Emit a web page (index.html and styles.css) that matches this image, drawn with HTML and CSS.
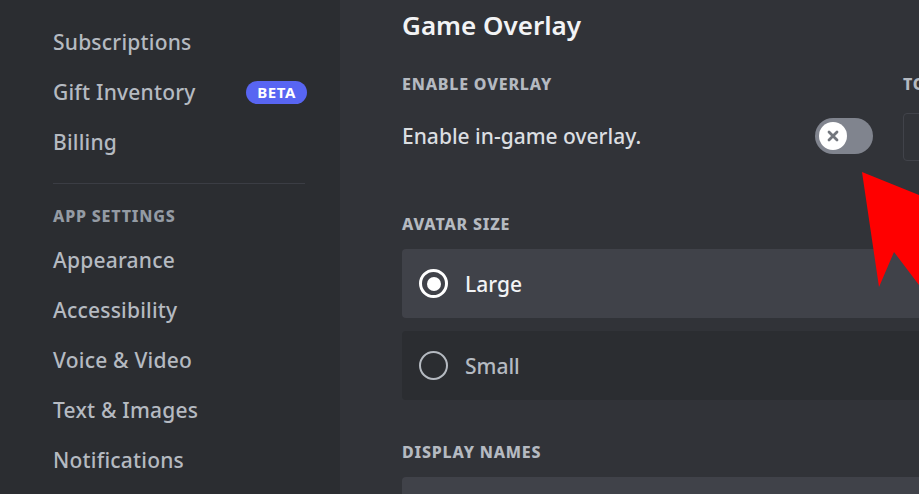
FILE: index.html
```html
<!DOCTYPE html>
<html lang="en">
    <head>
        <meta charset="utf-8">
        <title>User Settings - Game Overlay</title>
        <link rel="stylesheet" href="styles.css">
    </head>
    <body>
        <div class="app">
            <nav class="sidebar">
                <ul class="nav-list">
                    <li class="nav-item">Server Boost</li>
                    <li class="nav-item">Subscriptions</li>
                    <li class="nav-item">Gift Inventory <span class="badge">BETA</span></li>
                    <li class="nav-item">Billing</li>
                </ul>
                <div class="separator"></div>
                <h3 class="nav-header">App Settings</h3>
                <ul class="nav-list">
                    <li class="nav-item">Appearance</li>
                    <li class="nav-item">Accessibility</li>
                    <li class="nav-item">Voice &amp; Video</li>
                    <li class="nav-item">Text &amp; Images</li>
                    <li class="nav-item">Notifications</li>
                </ul>
            </nav>
            <main class="content">
                <h1 class="title">Game Overlay</h1>
                <div class="columns">
                    <section class="col-left">
                        <h2 class="section-header">Enable Overlay</h2>
                        <div class="setting-row">
                            <span class="setting-label">Enable in-game overlay.</span>
                            <div class="toggle">
                                <div class="knob">
                                    <svg width="16" height="16" viewBox="0 0 16 16">
                                        <path d="M4 4 L12 12 M12 4 L4 12" stroke="#72767d" stroke-width="2.8" stroke-linecap="round"/>
                                    </svg>
                                </div>
                            </div>
                        </div>
                    </section>
                    <section class="col-right">
                        <h2 class="section-header">Toggle Overlay Lock</h2>
                        <div class="keybind"></div>
                    </section>
                </div>

                <h2 class="section-header avatar-header">Avatar Size</h2>
                <div class="radio-group">
                    <div class="radio-option selected">
                        <span class="radio"></span>
                        <span class="radio-label">Large</span>
                    </div>
                    <div class="radio-option">
                        <span class="radio"></span>
                        <span class="radio-label">Small</span>
                    </div>
                </div>

                <h2 class="section-header names-header">Display Names</h2>
                <div class="radio-group">
                    <div class="radio-option selected">
                        <span class="radio"></span>
                        <span class="radio-label">Always</span>
                    </div>
                </div>
            </main>
        </div>
        <svg class="arrow" width="60" height="120" viewBox="0 0 60 120">
            <polygon points="3,2 60,25 60,115 35,82 20,117" fill="#ff0000"/>
        </svg>
    </body>
</html>
```

FILE: styles.css
```css
*{
    box-sizing: border-box;
}
body{
    margin: 0;
    padding: 0;
    background-color: #313338;
    font-family: "Noto Sans", "Open Sans", sans-serif;
    overflow: hidden;
}
.app{
    display: flex;
    width: 919px;
    height: 494px;
    overflow: hidden;
}
.sidebar{
    width: 340px;
    flex-shrink: 0;
    background-color: #2b2d31;
    padding: 0 33px 0 53px;
}
.nav-list{
    list-style: none;
    margin: 0;
    padding: 0;
}
.sidebar > .nav-list:first-child{
    margin-top: -33px;
}
.nav-item{
    height: 50px;
    display: flex;
    align-items: center;
    font-size: 21px;
    font-weight: 500;
    letter-spacing: 0.01em;
    color: #b5bac1;
}
.badge{
    margin-left: auto;
    background-color: #5865f2;
    color: #ffffff;
    font-size: 15px;
    font-weight: 700;
    line-height: 23px;
    padding: 0 11px;
    border-radius: 12px;
    letter-spacing: 0.04em;
}
.separator{
    height: 1px;
    background-color: #3b3d44;
    margin: 16px 2px 0 0;
}
.nav-header{
    margin: 22px 0 9px;
    line-height: 20px;
    font-size: 16px;
    font-weight: 800;
    text-transform: uppercase;
    letter-spacing: 0.05em;
    color: #949ba4;
}
.content{
    flex: 1;
    padding: 0 0 0 62px;
    min-width: 0;
    color: #dbdee1;
}
.title{
    margin: 9px 0 0;
    line-height: 32px;
    font-size: 26px;
    font-weight: 600;
    color: #f2f3f5;
}
.section-header{
    margin: 0;
    line-height: 20px;
    font-size: 16px;
    font-weight: 800;
    text-transform: uppercase;
    letter-spacing: 0.05em;
    color: #b5bac1;
    white-space: nowrap;
}
.columns{
    display: flex;
    gap: 30px;
    margin-top: 33px;
}
.col-left{
    width: 471px;
    flex-shrink: 0;
}
.col-right{
    width: 300px;
    flex-shrink: 0;
}
.setting-row{
    display: flex;
    align-items: center;
    justify-content: space-between;
    margin-top: 24px;
}
.setting-label{
    font-size: 21px;
    font-weight: 500;
    color: #dbdee1;
}
.toggle{
    width: 58px;
    height: 36px;
    border-radius: 18px;
    background-color: #80848e;
    padding: 4px;
    display: flex;
    align-items: center;
}
.knob{
    width: 28px;
    height: 28px;
    border-radius: 50%;
    background-color: #ffffff;
    display: flex;
    align-items: center;
    justify-content: center;
}
.keybind{
    margin-top: 19px;
    height: 48px;
    border: 1px solid #41434a;
    border-radius: 4px;
}
.avatar-header{
    margin-top: 53px;
}
.names-header{
    margin-top: 42px;
}
.radio-group{
    margin-top: 15px;
    width: 640px;
    display: flex;
    flex-direction: column;
    gap: 13px;
}
.radio-option{
    height: 69px;
    border-radius: 4px;
    background-color: #2b2d31;
    display: flex;
    align-items: center;
    padding-left: 17px;
    gap: 17px;
}
.radio-option.selected{
    background-color: #404249;
}
.radio{
    width: 29px;
    height: 29px;
    border-radius: 50%;
    border: 2px solid #b5bac1;
    display: flex;
    align-items: center;
    justify-content: center;
}
.selected .radio{
    border: 3px solid #ffffff;
}
.selected .radio::after{
    content: "";
    width: 14px;
    height: 14px;
    border-radius: 50%;
    background-color: #ffffff;
}
.radio-label{
    font-size: 21px;
    font-weight: 500;
    color: #b5bac1;
}
.selected .radio-label{
    color: #f2f3f5;
}
.arrow{
    position: absolute;
    left: 859px;
    top: 170px;
}
```
